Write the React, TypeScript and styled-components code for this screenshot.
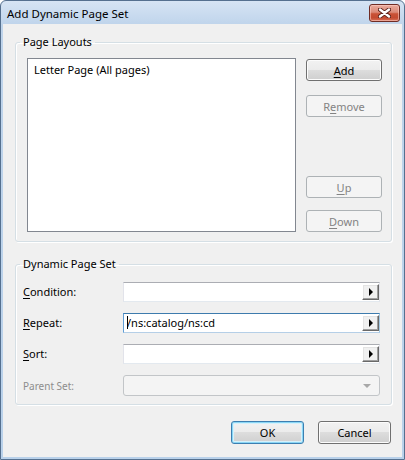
import React from 'react';
import styled, { createGlobalStyle, css } from 'styled-components';

const Global = createGlobalStyle`
  html, body { margin: 0; padding: 0; background: #ffffff; }
  body { font-family: "Noto Sans", "Open Sans", sans-serif; font-size: 11px; color: #000; }
  * { box-sizing: border-box; }
`;

const Window = styled.div`
  width: 405px;
  height: 460px;
  display: flex;
  flex-direction: column;
  border: 1px solid #55708f;
  border-radius: 6px 6px 0 0;
  background: linear-gradient(#d6e4f4, #bfd4eb 24px, #b9d1ea);
  padding: 0 2px 2px 2px;
`;

const TitleBar = styled.div`
  height: 23px;
  display: flex;
  align-items: flex-start;
  justify-content: space-between;
  padding-left: 4px;
`;

const TitleText = styled.div`
  font-size: 11.5px;
  line-height: 16px;
  padding-top: 5px;
  color: #000;
`;

const CloseButton = styled.div`
  width: 31px;
  height: 18px;
  margin-top: 3px;
  margin-right: 2px;
  border: 1px solid #6f2c24;
  border-radius: 3px;
  background: linear-gradient(#e9aa9d 0%, #dc8a78 45%, #c95237 55%, #c44a30 80%, #d9745c 100%);
  box-shadow: inset 0 0 0 1px rgba(255, 210, 200, 0.55);
  display: flex;
  align-items: center;
  justify-content: center;
`;

const Client = styled.div`
  flex: 1;
  background: #f0f0f0;
  display: flex;
  flex-direction: column;
  padding: 0 10px 0 12px;
`;

const Group = styled.fieldset<{ $top: number }>`
  margin: ${(p) => p.$top}px 0 0 0;
  padding: 0;
  min-width: 0;
  border: 1px solid #d5dfe5;
  border-radius: 3px;
  box-shadow: inset 1px 1px 0 #ffffff, 1px 1px 0 #ffffff;
`;

const Legend = styled.legend`
  margin-left: 4px;
  padding: 0 3px;
  line-height: 16px;
  font-size: 11px;
  color: #000;
`;

const LayoutsBody = styled.div`
  display: flex;
  padding: 8px 9px 9px 11px;
`;

const ListBox = styled.div`
  flex: 1;
  height: 174px;
  border: 1px solid #828790;
  background: #ffffff;
  padding: 3px 0 0 6px;
`;

const ListItem = styled.div`
  line-height: 16px;
`;

const ButtonColumn = styled.div`
  width: 76px;
  margin-left: 10px;
  padding-top: 1px;
  display: flex;
  flex-direction: column;
`;

const Spacer = styled.div`
  flex: 1;
`;

const Button = styled.button<{ $w: number; $h: number; $gap?: number; $primary?: boolean }>`
  width: ${(p) => p.$w}px;
  height: ${(p) => p.$h}px;
  margin-top: ${(p) => p.$gap ?? 0}px;
  flex: none;
  padding: 0;
  font-family: inherit;
  font-size: 11px;
  color: #000;
  border: 1px solid #707070;
  border-radius: 3px;
  background: linear-gradient(#f2f2f2 0%, #ebebeb 50%, #dddddd 50%, #cfcfcf 100%);
  box-shadow: inset 0 0 0 1px #fcfcfc;
  &:disabled {
    color: #838383;
    border-color: #adb2b5;
    background: #f4f4f4;
    box-shadow: none;
  }
  ${(p) =>
    p.$primary &&
    css`
      border-color: #3c7fb1;
      box-shadow: inset 0 0 0 1px #8ad6f5, inset 0 0 0 2px #d6f1fb;
    `}
`;

const Mn = styled.span`
  text-decoration: underline;
  text-underline-offset: 2px;
`;

const SetBody = styled.div`
  display: grid;
  grid-template-columns: 100px 257px;
  row-gap: 11px;
  align-items: center;
  padding: 10px 11px 8px 7px;
`;

const FieldLabel = styled.div<{ $disabled?: boolean }>`
  font-size: ${(p) => (p.$disabled ? '10px' : '11px')};
  color: ${(p) => (p.$disabled ? '#8d8d8d' : '#000')};
  line-height: 16px;
`;

const TextBox = styled.div<{ $focused?: boolean }>`
  height: 20px;
  display: flex;
  align-items: center;
  background: #ffffff;
  border: 1px solid;
  border-color: #abadb3 #e2e3ea #e3e9ef #e2e3ea;
  padding-left: 3px;
  ${(p) =>
    p.$focused &&
    css`
      border-color: #3d7bad #a4c9e3 #b5cfe7 #5f9ed6;
    `}
`;

const BoxText = styled.div`
  flex: 1;
  line-height: 16px;
  white-space: nowrap;
  overflow: hidden;
`;

const Caret = styled.span`
  display: inline-block;
  width: 1px;
  height: 13px;
  background: #000;
  vertical-align: -2px;
  margin-right: -1px;
`;

const ArrowButton = styled.div`
  width: 17px;
  height: 16px;
  background: #f0f0f0;
  border: 1px solid;
  border-color: #ffffff #696969 #696969 #ffffff;
  box-shadow: inset -1px -1px 0 #a0a0a0, inset 1px 1px 0 #e3e3e3;
  display: flex;
  align-items: center;
  justify-content: center;
  &::after {
    content: '';
    width: 0;
    height: 0;
    border-left: 4px solid #000;
    border-top: 4px solid transparent;
    border-bottom: 4px solid transparent;
    margin-left: 1px;
  }
`;

const ComboBox = styled.div`
  height: 21px;
  border: 1px solid #c2c5c8;
  border-radius: 3px;
  background: #f4f4f4;
  display: flex;
  align-items: center;
  justify-content: flex-end;
  padding-right: 8px;
  &::after {
    content: '';
    width: 0;
    height: 0;
    border-top: 4px solid #a8a8a8;
    border-left: 4px solid transparent;
    border-right: 4px solid transparent;
  }
`;

const Footer = styled.div`
  display: flex;
  justify-content: flex-end;
  gap: 14px;
  margin-top: 16px;
  margin-right: 1px;
`;

const CloseGlyph = () => (
  <svg width="13" height="10" viewBox="0 0 13 10">
    <path d="M2 1.5 L11 8.5 M11 1.5 L2 8.5" stroke="#5a1f18" strokeWidth="4.2" strokeLinecap="round" />
    <path d="M2 1.5 L11 8.5 M11 1.5 L2 8.5" stroke="#ffffff" strokeWidth="2.4" strokeLinecap="round" />
  </svg>
);

export default function App() {
  return (
    <>
      <Global />
      <Window>
        <TitleBar>
          <TitleText>Add Dynamic Page Set</TitleText>
          <CloseButton>
            <CloseGlyph />
          </CloseButton>
        </TitleBar>
        <Client>
          <Group $top={10}>
            <Legend>Page Layouts</Legend>
            <LayoutsBody>
              <ListBox>
                <ListItem>Letter Page (All pages)</ListItem>
              </ListBox>
              <ButtonColumn>
                <Button $w={76} $h={22}>
                  <Mn>A</Mn>dd
                </Button>
                <Button $w={76} $h={22} $gap={14} disabled>
                  R<Mn>e</Mn>move
                </Button>
                <Spacer />
                <Button $w={76} $h={22} disabled>
                  <Mn>U</Mn>p
                </Button>
                <Button $w={76} $h={22} $gap={12} disabled>
                  <Mn>D</Mn>own
                </Button>
              </ButtonColumn>
            </LayoutsBody>
          </Group>
          <Group $top={14}>
            <Legend>Dynamic Page Set</Legend>
            <SetBody>
              <FieldLabel>
                <Mn>C</Mn>ondition:
              </FieldLabel>
              <TextBox>
                <BoxText />
                <ArrowButton />
              </TextBox>
              <FieldLabel>
                <Mn>R</Mn>epeat:
              </FieldLabel>
              <TextBox $focused>
                <BoxText>
                  <Caret />/ns:catalog/ns:cd
                </BoxText>
                <ArrowButton />
              </TextBox>
              <FieldLabel>
                <Mn>S</Mn>ort:
              </FieldLabel>
              <TextBox>
                <BoxText />
                <ArrowButton />
              </TextBox>
              <FieldLabel $disabled>Parent Set:</FieldLabel>
              <ComboBox />
            </SetBody>
          </Group>
          <Footer>
            <Button $w={73} $h={23} $primary>
              OK
            </Button>
            <Button $w={73} $h={23}>
              Cancel
            </Button>
          </Footer>
        </Client>
      </Window>
    </>
  );
}
